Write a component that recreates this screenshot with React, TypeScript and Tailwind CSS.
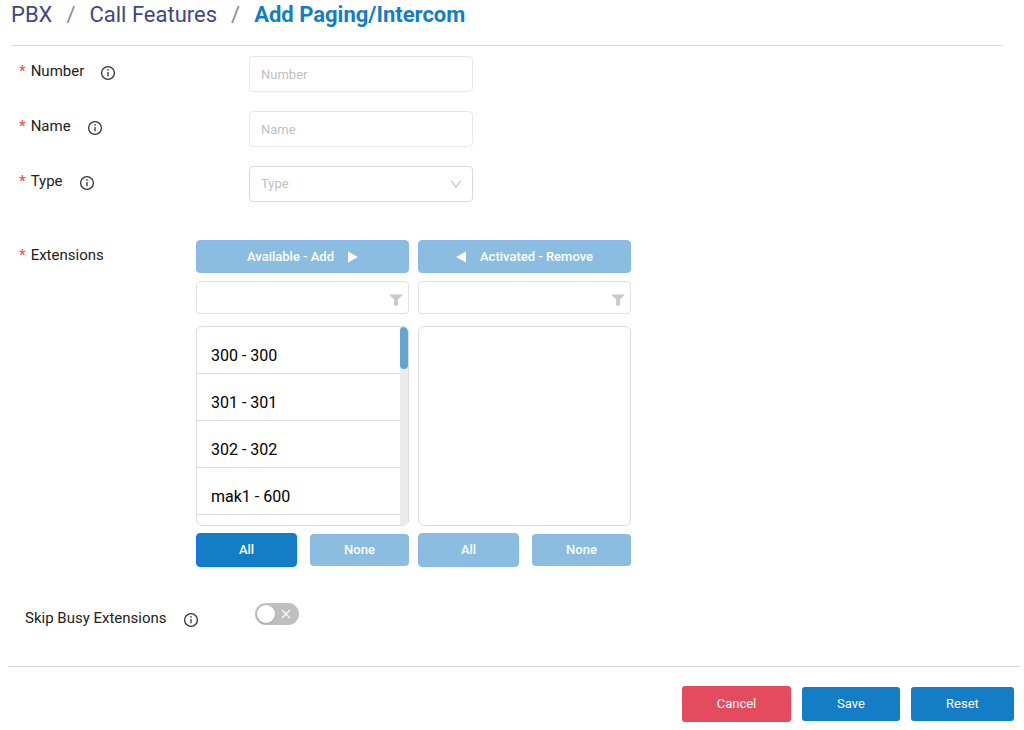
import { useState } from 'react'
import type { ReactNode } from 'react'
import clsx from 'clsx'

const EXTENSIONS = ['300 - 300', '301 - 301', '302 - 302', 'mak1 - 600']

function InfoIcon() {
  return (
    <svg viewBox="0 0 16 16" className="mt-1 h-4 w-4 text-[#333333]" fill="none" stroke="currentColor" aria-hidden="true">
      <circle cx="8" cy="8" r="6.4" strokeWidth="1.3" />
      <path d="M8 7v4.3" strokeWidth="1.3" />
      <circle cx="8" cy="4.9" r="0.8" fill="currentColor" stroke="none" />
    </svg>
  )
}

function FilterIcon() {
  return (
    <svg viewBox="0 0 14 12" className="pointer-events-none absolute right-1.5 bottom-2 h-3 w-3.5" fill="#c8c8c8" aria-hidden="true">
      <path d="M0 0.5h14L9 5.5v6L5.2 11.8V5.5z" />
    </svg>
  )
}

interface FormRowProps {
  id: string
  label: string
  children: ReactNode
}

function FormRow({ id, label, children }: FormRowProps) {
  return (
    <div className="flex">
      <div className="flex w-[230px] shrink-0 items-center gap-4 self-start">
        <label htmlFor={id} className="text-[15px] leading-[30px]">
          <span className="mr-[5px] font-medium text-[#ff4d4f]">*</span>
          {label}
        </label>
        <InfoIcon />
      </div>
      {children}
    </div>
  )
}

interface TransferColumnProps {
  name: string
  title: ReactNode
  items: string[]
  allActive?: boolean
}

function TransferColumn({ name, title, items, allActive = false }: TransferColumnProps) {
  return (
    <div className="w-[213px]">
      <button
        type="button"
        className="flex h-[33px] w-full items-center justify-center gap-[14px] rounded border border-[#8ab6f3] bg-[#8bbde0] text-[13px] font-medium text-white"
      >
        {title}
      </button>
      <div className="relative mt-2">
        <input
          type="text"
          aria-label={`Filter ${name}`}
          className="block h-[33px] w-full rounded border border-[#dfe3e6] px-3 text-sm outline-none"
        />
        <FilterIcon />
      </div>
      <div className="mt-3 flex h-[200px] overflow-hidden rounded-md border border-[#dddddd]">
        <ul className="flex-1">
          {items.map((item) => (
            <li key={item} className="flex h-[47px] items-center border-b border-[#dddddd] pt-[11px] pl-[14px] text-base text-black">
              {item}
            </li>
          ))}
        </ul>
        {items.length > 0 && (
          <div className="w-2 bg-[#ebebeb]">
            <div className="h-[42px] rounded bg-[#62a5d3]" />
          </div>
        )}
      </div>
      <div className="mt-[7px] flex items-center gap-[13px]">
        <button
          type="button"
          className={clsx(
            'h-[34px] w-[101px] rounded border text-[13px] font-medium text-white',
            allActive ? 'border-[#0f72f0] bg-[#137dc5]' : 'border-[#8ab6f3] bg-[#8bbde0]'
          )}
        >
          All
        </button>
        <button type="button" className="h-8 flex-1 rounded bg-[#8bbde0] text-[13px] font-medium text-white">
          None
        </button>
      </div>
    </div>
  )
}

export default function App() {
  const [skipBusy, setSkipBusy] = useState(false)

  return (
    <main className="bg-white font-['Roboto',sans-serif] text-[#222222]">
      <nav
        aria-label="Breadcrumb"
        className="mr-[21px] ml-[11px] flex h-[46px] gap-[14px] border-b border-[#d9d9dc] text-[22px] leading-[30px] text-[#46467f]"
      >
        <a href="#pbx">PBX</a>
        <span className="text-[#8c8c8c]">/</span>
        <a href="#call-features">Call Features</a>
        <span className="text-[#8c8c8c]">/</span>
        <span className="font-bold text-[#137dc5]">Add Paging/Intercom</span>
      </nav>

      <form>
        <div className="flex flex-col gap-[19px] pt-[10px] pl-[19px]">
          <FormRow id="number" label="Number">
            <input
              id="number"
              type="text"
              placeholder="Number"
              className="h-9 w-[224px] rounded-sm border border-[#e6e8ea] px-[11px] text-[13px] outline-none placeholder:text-[#bfbfbf]"
            />
          </FormRow>
          <FormRow id="name" label="Name">
            <input
              id="name"
              type="text"
              placeholder="Name"
              className="h-9 w-[224px] rounded-sm border border-[#e6e8ea] px-[11px] text-[13px] outline-none placeholder:text-[#bfbfbf]"
            />
          </FormRow>
          <FormRow id="type" label="Type">
            <div className="relative w-[224px]">
              <select
                id="type"
                defaultValue=""
                className="block h-9 w-full appearance-none rounded-sm border border-[#d9d9d9] bg-white px-[11px] text-[13px] text-[#bfbfbf] outline-none"
              >
                <option value="">Type</option>
              </select>
              <svg viewBox="0 0 12 12" className="pointer-events-none absolute top-3 right-[11px] h-3 w-3" fill="none" stroke="#bfbfbf" strokeWidth="1.2" aria-hidden="true">
                <path d="M1.2 2.5L6 9L10.8 2.5" />
              </svg>
            </div>
          </FormRow>
        </div>

        <div className="mt-[38px] flex pl-[19px]" role="group" aria-labelledby="extensions-label">
          <div id="extensions-label" className="w-[177px] shrink-0 text-[15px] leading-[30px]">
            <span className="mr-[5px] font-medium text-[#ff4d4f]">*</span>
            Extensions
          </div>
          <div className="flex gap-[9px]">
            <TransferColumn
              name="available"
              items={EXTENSIONS}
              allActive
              title={
                <>
                  Available - Add
                  <svg viewBox="0 0 10 12" className="h-3 w-2.5" fill="currentColor" aria-hidden="true">
                    <path d="M0 0.5v11L10 6z" />
                  </svg>
                </>
              }
            />
            <TransferColumn
              name="activated"
              items={[]}
              title={
                <>
                  <svg viewBox="0 0 10 12" className="h-3 w-2.5" fill="currentColor" aria-hidden="true">
                    <path d="M10 0.5v11L0 6z" />
                  </svg>
                  Activated - Remove
                </>
              }
            />
          </div>
        </div>

        <div className="mt-9 flex items-start pl-[25px]">
          <div className="flex w-[230px] shrink-0 items-center gap-4">
            <label htmlFor="skip-busy" className="text-[15px] leading-[30px]">
              Skip Busy Extensions
            </label>
            <InfoIcon />
          </div>
          <label className="relative block h-[22px] w-11 cursor-pointer">
            <input
              id="skip-busy"
              type="checkbox"
              role="switch"
              checked={skipBusy}
              onChange={(e) => setSkipBusy(e.target.checked)}
              className="peer sr-only"
            />
            <span className="block h-full rounded-full bg-[#bfbfbf] peer-checked:bg-[#137dc5]" />
            <span className="absolute top-0.5 left-0.5 h-[18px] w-[18px] rounded-full bg-white shadow-sm peer-checked:left-6" />
            <svg viewBox="0 0 10 10" className="absolute top-1.5 right-2 h-2.5 w-2.5 peer-checked:hidden" fill="none" stroke="#ffffff" strokeWidth="1.1" aria-hidden="true">
              <path d="M1 1l8 8M9 1L1 9" />
            </svg>
          </label>
        </div>

        <div className="mt-[33px] mr-1 ml-2 flex items-center justify-end gap-[11px] border-t border-[#d3d4de] pt-[19px] pr-1.5 pb-2 text-[13px] text-white">
          <button type="button" className="h-9 w-[109px] rounded-[3px] bg-[#e54b5e]">
            Cancel
          </button>
          <button type="submit" className="h-[34px] w-[98px] rounded-[3px] bg-[#137dc5]">
            Save
          </button>
          <button type="reset" className="h-[34px] w-[103px] rounded-[3px] bg-[#137dc5]">
            Reset
          </button>
        </div>
      </form>
    </main>
  )
}
